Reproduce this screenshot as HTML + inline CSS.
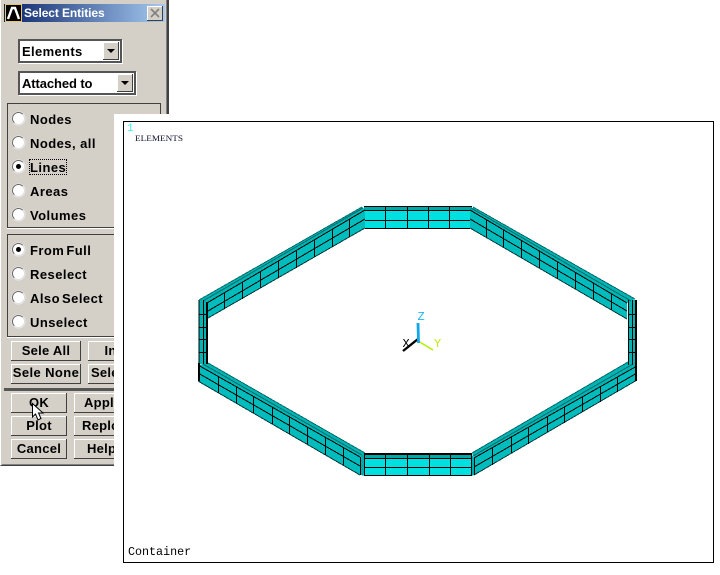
<!DOCTYPE html>
<html><head><meta charset="utf-8"><style>
html,body{margin:0;padding:0;background:#fff}
#p{position:relative;width:720px;height:575px;overflow:hidden;background:#fff;font:bold 13px "Liberation Sans",sans-serif;color:#000}
#p div{position:absolute;box-sizing:border-box}
.dlg{left:0;top:0;width:169px;height:466px;background:#d4d0c8;border-right:2px solid #404040;border-bottom:1px solid #404040;border-left:1px solid #fff;box-shadow:inset 1px 0 0 #d4d0c8,inset -1px 0 0 #808080,inset 0 -1px 0 #808080}
.tb{left:4px;top:4px;width:161px;height:18px;background:linear-gradient(90deg,#0a246a,#a6caf0)}
.ti{left:24px;top:4px;color:#fff;font-size:12px;letter-spacing:-.1px;line-height:18px;white-space:nowrap}
.ic{left:5px;top:4px;width:17px;height:18px;background:#000;border:1px solid #e8c860}
.cl{left:147px;top:6px;width:16px;height:15px;background:#d4d0c8;box-shadow:inset -1px -1px 0 #404040,inset 1px 1px 0 #fff}
.dd{height:24px;background:#fff;border:2px solid #555;box-shadow:1px 1px 0 #fff;line-height:22px;padding-left:2px;white-space:nowrap}
.ar{top:1px;right:1px;width:16px;height:18px;background:#d4d0c8;box-shadow:inset -1px -1px 0 #404040,inset 1px 1px 0 #fff}
.ar:after{content:"";position:absolute;left:4px;top:7px;border:4px solid transparent;border-top:4px solid #000;border-bottom:0}
.gr{left:7px;width:154px;border:1px solid #404040;box-shadow:0 1px 0 #fff}
.r{left:12px;width:13px;height:13px;border-radius:50%;background:#fff;border:1px solid #666;border-right-color:#ddd;border-bottom-color:#ddd;box-shadow:0 0 0 .5px #eee}
.d:after{content:"";position:absolute;left:3px;top:3px;width:5px;height:5px;border-radius:50%;background:#000}
.l{left:30px;letter-spacing:.45px;line-height:16px;white-space:nowrap}
.w{word-spacing:-2px}
.b{background:#d4d0c8;box-shadow:inset -1px -1px 0 #404040,inset 1px 1px 0 #fff;text-align:center;letter-spacing:.25px;line-height:19px;white-space:nowrap}
.ov{left:114px;top:114px;width:606px;height:461px;background:#fff}
.pl{left:123px;top:121px;width:591px;height:442px;border:1px solid #000;background:#fff}
</style></head><body><div id="p">
<div class="dlg"></div>
<div class="tb"></div>
<div class="ic"><svg width="15" height="16" style="position:absolute;left:0;top:0"><path d="M2 14L6 3H9L13 14" fill="none" stroke="#fff" stroke-width="2.4"/></svg></div>
<div class="ti">Select Entities</div>
<div class="cl"><svg width="16" height="15" style="position:absolute;left:0;top:0"><path d="M4 3L12 11M12 3L4 11" stroke="#808080" stroke-width="1.6"/></svg></div>
<div class="dd" style="left:18px;top:39px;width:104px;letter-spacing:.35px">Elements<div class="ar"></div></div>
<div class="dd" style="left:18px;top:71px;width:118px;letter-spacing:-.1px">Attached to<div class="ar"></div></div>
<div class="gr" style="top:103px;height:125px"></div>
<div class="gr" style="top:234px;height:103px"></div>
<div class="r" style="top:112px"></div><div class="l" style="top:112px">Nodes</div>
<div class="r" style="top:136px"></div><div class="l" style="top:136px">Nodes, all</div>
<div class="r d" style="top:160px"></div><div class="l" style="top:160px">Lines</div>
<div style="left:29px;top:159px;width:38px;height:16px;border:1px dotted #000"></div>
<div class="r" style="top:184px"></div><div class="l" style="top:184px">Areas</div>
<div class="r" style="top:208px"></div><div class="l" style="top:208px">Volumes</div>
<div class="r d" style="top:243px"></div><div class="l w" style="top:243px">From Full</div>
<div class="r" style="top:267px"></div><div class="l" style="top:267px">Reselect</div>
<div class="r" style="top:291px"></div><div class="l w" style="top:291px">Also Select</div>
<div class="r" style="top:315px"></div><div class="l" style="top:315px">Unselect</div>
<div class="b" style="left:11px;top:341px;width:70px;height:20px">Sele All</div>
<div class="b" style="left:88px;top:341px;width:70px;height:20px">Invert</div>
<div class="b" style="left:11px;top:364px;width:70px;height:20px;letter-spacing:.4px;line-height:18px">Sele None</div>
<div class="b" style="left:88px;top:364px;width:70px;height:20px;text-align:left;padding-left:3px;line-height:18px">Sele Belo</div>
<div style="left:4px;top:388px;width:160px;height:3px;background:#555"></div>
<div class="b" style="left:11px;top:393px;width:56px;height:20px">OK</div>
<div class="b" style="left:74px;top:393px;width:56px;height:20px;text-align:left;padding-left:10px">Apply</div>
<div class="b" style="left:11px;top:416px;width:56px;height:20px">Plot</div>
<div class="b" style="left:74px;top:416px;width:56px;height:20px;text-align:left;padding-left:8px">Replot</div>
<div class="b" style="left:11px;top:439px;width:56px;height:20px">Cancel</div>
<div class="b" style="left:74px;top:439px;width:56px;height:20px;text-align:left;padding-left:13px">Help</div>
<div class="ov"></div>
<div class="pl"></div>
<svg width="720" height="575" style="position:absolute;left:0;top:0">
<g shape-rendering="crispEdges">
<polygon points="199,300 362,207 365,210 207,303" fill="#00b4b4"/>
<polygon points="207,303 365,210 365,228 208,318" fill="#00bcbc"/>
<polygon points="473,207 635,299 627,303 470,210" fill="#00b4b4"/>
<polygon points="470,210 627,303 627,319 470,228" fill="#00bcbc"/>
<polygon points="198,365 208,363 365,453 360,457" fill="#00b4b4"/>
<polygon points="198,365 360,457 360,475 198,381" fill="#00bcbc"/>
<polygon points="360,457 365,453 365,476 361,475" fill="#00a8a8"/>
<polygon points="472,453 628,362 637,366 474,458" fill="#00b4b4"/>
<polygon points="474,458 637,366 637,380 474,475" fill="#00bcbc"/>
<polygon points="471,453 474,458 474,475 471,476" fill="#00a8a8"/>
<rect x="199" y="300" width="9" height="64" fill="#00b4b4"/>
<rect x="628" y="300" width="9" height="65" fill="#00b4b4"/>
<rect x="364" y="207" width="108" height="4" fill="#00a8a8"/>
<rect x="365" y="211" width="105" height="17" fill="#00e0e0"/>
<rect x="364" y="453" width="108" height="5" fill="#00a8a8"/>
<rect x="364" y="458" width="108" height="17" fill="#00e0e0"/>
</g>
<g fill="none" stroke="#006c6c" stroke-width="1" shape-rendering="crispEdges">
<path d="M203 301L363 208M199 300L362 207M473 207L635 299M471 208L631 301"/>
<path d="M203 364L362 455M208 363L365 453M472 453L628 362M473 456L633 364"/>
</g>
<g fill="none" stroke="#003c3c" stroke-width="1" shape-rendering="crispEdges">
<path d="M208 318L365 228M470 228L627 319M198 381L360 475M474 475L637 380"/>
</g>
<g fill="none" stroke="#000" stroke-width="1" shape-rendering="crispEdges">
<path d="M364 206.500H472M364 210.500H470M365 228.500H470M365 220.500H470M385.500 207V228M407.500 207V228M428.500 207V228M449.500 207V228"/>
<path d="M364 453.500H472M364 454.500H472M364 458.500H472M364 467.500H472M364 475.500H472M385.500 454V475M407.500 454V475M429.500 454V475M450.500 454V475M364.500 454V476M471.500 454V476"/>
<path d="M207 303L365 210M208 311L365 219M224.500 293V309M242.500 282V299M260.500 272V288M278.500 261V278M296.500 251V268M314.500 240V257M332.500 229V247M349.500 219V237"/>
<path d="M470 210L627 303M470 219L627 311M486.500 220V237M503.500 230V247M521.500 240V258M539.500 251V268M557.500 262V279M575.500 272V289M593.500 283V299M611.500 294V310"/>
<path d="M198 365L360 457M198 373L360 466M218.500 376V393M236.500 387V403M253.500 396V413M272.500 407V424M289.500 417V434M307.500 427V444M325.500 437V455M343.500 447V465M360.500 457V475"/>
<path d="M474 458L637 366M474 467L637 373M474.500 458V475M492.500 448V465M511.500 437V453M528.500 428V444M547.500 417V432M564.500 407V423M582.500 397V412M600.500 387V402M617.500 377V392"/>
<path d="M199 300V364M203.500 300V364M199 314.500H208M199 327.500H208M199 339.500H208M199 352.500H208"/>
<path d="M628.500 300V365M632.500 300V365M628 314.500H637M628 327.500H637M628 339.500H637M628 352.500H637"/>
</g>
<g shape-rendering="crispEdges" fill="#000">
<rect x="206" y="302" width="2" height="62"/>
<rect x="635" y="300" width="2" height="81"/>
<rect x="198" y="363" width="2" height="18"/>
</g>
<path d="M403 351L418 339" stroke="#000" stroke-width="2.4" fill="none"/>
<path d="M418 341L433 350" stroke="#b4f000" stroke-width="1.6" fill="none"/>
<path d="M418 323L418.500 343" stroke="#10a8e8" stroke-width="2.800" fill="none"/>
<text x="417.500" y="320" font-family="Liberation Mono" font-size="12" font-weight="normal" fill="#20b8f0">Z</text>
<text x="402.500" y="347" font-family="Liberation Mono" font-size="12" font-weight="normal" fill="#000">X</text>
<text x="434" y="347" font-family="Liberation Mono" font-size="12" font-weight="normal" fill="#b8f000">Y</text>
<text x="127" y="131" font-family="Liberation Mono" font-size="11" font-weight="normal" fill="#40f0f0">1</text>
<text x="135" y="141" font-family="Liberation Serif" font-size="8.500" font-weight="normal" fill="#101030" textLength="48" lengthAdjust="spacingAndGlyphs">ELEMENTS</text>
<text x="128" y="555" font-family="Liberation Mono" font-size="11.700" font-weight="normal" fill="#000">Container</text>
<path d="M32.500 403.500V417L35.500 414L38 420L41 418.500L38.500 413H43Z" fill="#fff" stroke="#000" stroke-width="1"/>
</svg>
</div></body></html>
